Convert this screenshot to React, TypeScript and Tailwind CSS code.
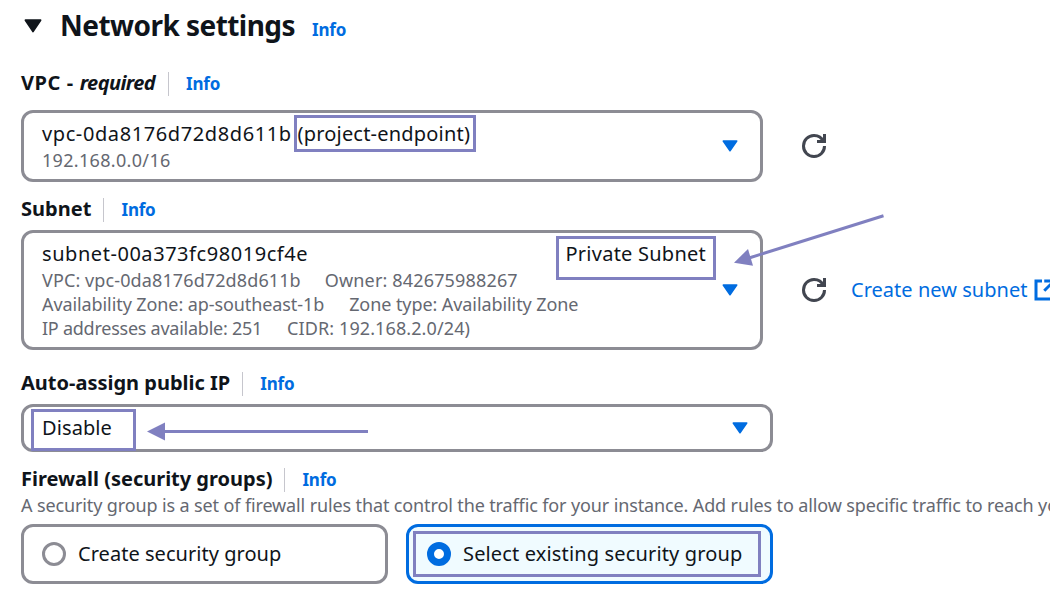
import type { ReactNode } from "react";

function Caret({ className }: { className: string }) {
  return (
    <svg viewBox="0 0 16 12" className={className} fill="currentColor" stroke="currentColor" strokeWidth="1.5" strokeLinejoin="round" preserveAspectRatio="none">
      <path d="M1.25 1h13.5L8 10.8z" />
    </svg>
  );
}

function Refresh() {
  return (
    <svg viewBox="0 0 16 16" className="size-6 shrink-0 text-[#424650]" fill="none" stroke="currentColor" strokeWidth="2">
      <path d="M10 5h5V0" />
      <path d="M15 8a6.957 6.957 0 0 1-7 7 6.957 6.957 0 0 1-7-7 6.957 6.957 0 0 1 7-7 6.87 6.87 0 0 1 6.3 4" />
    </svg>
  );
}

function External() {
  return (
    <svg viewBox="0 0 16 16" className="size-6 shrink-0" fill="none" stroke="currentColor" strokeWidth="2">
      <path d="M6 2H2v12h12V9" />
      <path d="M7.5 2H14v6M7.5 8.5 14 2" />
    </svg>
  );
}

function Info() {
  return <a className="block text-[17px] leading-6 font-bold tracking-[-0.2px] text-[#006ce0]">Info</a>;
}

function Label({ children }: { children: ReactNode }) {
  return (
    <div className="flex h-6 items-start text-xl leading-6 font-bold whitespace-nowrap">
      <div className="pt-px">{children}</div>
      <div className="mt-0.5 mr-[17px] ml-3 h-6 w-px bg-[#c6c6cd]" />
      <div className="pt-0.5"><Info /></div>
    </div>
  );
}

function Mark({ className }: { className: string }) {
  return <div className={"pointer-events-none absolute border-3 border-[#8080c0] " + className} />;
}

const field = "flex shrink-0 items-center justify-between rounded-xl border-3 border-[#8c8c94] pl-[18px]";
const value = "text-xl leading-6 whitespace-nowrap";
const detail = "flex text-lg leading-6 text-[#656871] whitespace-nowrap";

export default function App() {
  return (
    <main className="relative h-[601px] w-[1050px] overflow-hidden bg-white pt-[9px] pl-[21px] font-['Noto_Sans',sans-serif] text-[#0f141a]">
      <header className="flex h-8 items-start">
        <Caret className="mt-2.5 ml-[3px] h-3.5 w-[18px]" />
        <h1 className="ml-[18px] text-[28px] leading-8 font-bold tracking-[-0.54px] whitespace-nowrap">Network settings</h1>
        <div className="mt-[9px] ml-[17px]"><Info /></div>
      </header>

      <section className="mt-[29px]">
        <Label>
          <span className="tracking-[0.6px]">VPC - </span>
          <span className="mr-px tracking-[-0.6px] italic">required</span>
        </Label>
        <div className="mt-4 flex items-center">
          <div className={field + " h-[72px] w-[742px] pr-[22px]"}>
            <div className="mt-[9px] self-start">
              <div className={value}>
                <span className="tracking-[0.6px]">vpc-0da8176d72d8d611b </span>
                <span className="tracking-[0.2px]">(project-endpoint)</span>
              </div>
              <div className={detail + " mt-0.5 tracking-[0.32px]"}>192.168.0.0/16</div>
            </div>
            <Caret className="h-3 w-4 text-[#006ce0]" />
          </div>
          <div className="ml-[39px]"><Refresh /></div>
        </div>
      </section>

      <section className="mt-[14px]">
        <Label><span className="tracking-[0.03px]">Subnet</span></Label>
        <div className="mt-2.5 flex items-center">
          <div className={field + " h-[120px] w-[742px] pr-[22px]"}>
            <div className="mt-[9px] w-[664px] self-start">
              <div className={value + " flex justify-between"}>
                <span className="tracking-[0.55px]">subnet-00a373fc98019cf4e</span>
                <span className="tracking-[0.24px]">Private Subnet</span>
              </div>
              <div className={detail + " mt-0.5 gap-6"}>
                <span className="tracking-[0.11px]">VPC: vpc-0da8176d72d8d611b</span>
                <span className="tracking-[0.16px]">Owner: 842675988267</span>
              </div>
              <div className={detail + " gap-[25px]"}>
                <span className="tracking-[-0.09px]">Availability Zone: ap-southeast-1b</span>
                <span className="tracking-[-0.08px]">Zone type: Availability Zone</span>
              </div>
              <div className={detail + " gap-[25px]"}>
                <span className="tracking-[-0.25px]">IP addresses available: 251</span>
                <span className="tracking-[0.1px]">CIDR: 192.168.2.0/24)</span>
              </div>
            </div>
            <Caret className="h-3 w-4 text-[#006ce0]" />
          </div>
          <div className="ml-[39px]"><Refresh /></div>
          <a className="ml-[25px] flex items-center gap-1.5 text-xl leading-6 tracking-[0.03px] whitespace-nowrap text-[#006ce0]">
            Create new subnet <External />
          </a>
        </div>
      </section>

      <section className="mt-5">
        <Label>Auto-assign public IP</Label>
        <div className={field + " mt-2.5 h-12 w-[752px] pr-[22px]"}>
          <span className={value + " tracking-[0.1px]"}>Disable</span>
          <Caret className="h-3 w-4 text-[#006ce0]" />
        </div>
      </section>

      <section className="mt-3.5">
        <Label><span className="tracking-[-0.01px]">Firewall (security groups)</span></Label>
        <p className="mt-[3px] text-lg leading-6 tracking-[-0.125px] whitespace-nowrap text-[#656871]">
          A security group is a set of firewall rules that control the traffic for your instance. Add rules to allow specific traffic to reach your instance.
        </p>
        <div className="mt-[7px] flex gap-[18px]">
          <div className="flex h-[60px] w-[367px] items-center gap-3 rounded-xl border-3 border-[#8c8c94] pl-[18px]">
            <div className="size-6 rounded-full border-3 border-[#8c8c94]" />
            <span className={value + " tracking-[0.04px]"}>Create security group</span>
          </div>
          <div className="flex h-[60px] w-[367px] items-center gap-3 rounded-xl border-3 border-[#006ce0] bg-[#f0fbff] pl-[18px]">
            <div className="size-6 rounded-full border-7 border-[#006ce0] bg-white" />
            <span className={value + " tracking-[0.15px]"}>Select existing security group</span>
          </div>
        </div>
      </section>

      <Mark className="top-[115px] left-[294px] h-[37px] w-[182px]" />
      <Mark className="top-[236px] left-[556px] h-11 w-40" />
      <Mark className="top-[409px] left-[31px] h-[42px] w-[105px]" />
      <Mark className="top-[531px] left-[413px] h-[46px] w-[348px]" />
      <svg className="pointer-events-none absolute top-[210px] left-[730px] h-[60px] w-40 text-[#8080c0]" viewBox="730 210 160 60">
        <path d="M883.5 215.7 749 258" stroke="currentColor" strokeWidth="3" />
        <path d="m734 262.7 14-13.7 5 16.7z" fill="currentColor" />
      </svg>
      <svg className="pointer-events-none absolute top-[420px] left-[145px] h-6 w-[225px] text-[#8080c0]" viewBox="145 420 225 24">
        <path d="M368 431.5H163" stroke="currentColor" strokeWidth="3" />
        <path d="m147 431.5 18-9v18z" fill="currentColor" />
      </svg>
    </main>
  );
}
